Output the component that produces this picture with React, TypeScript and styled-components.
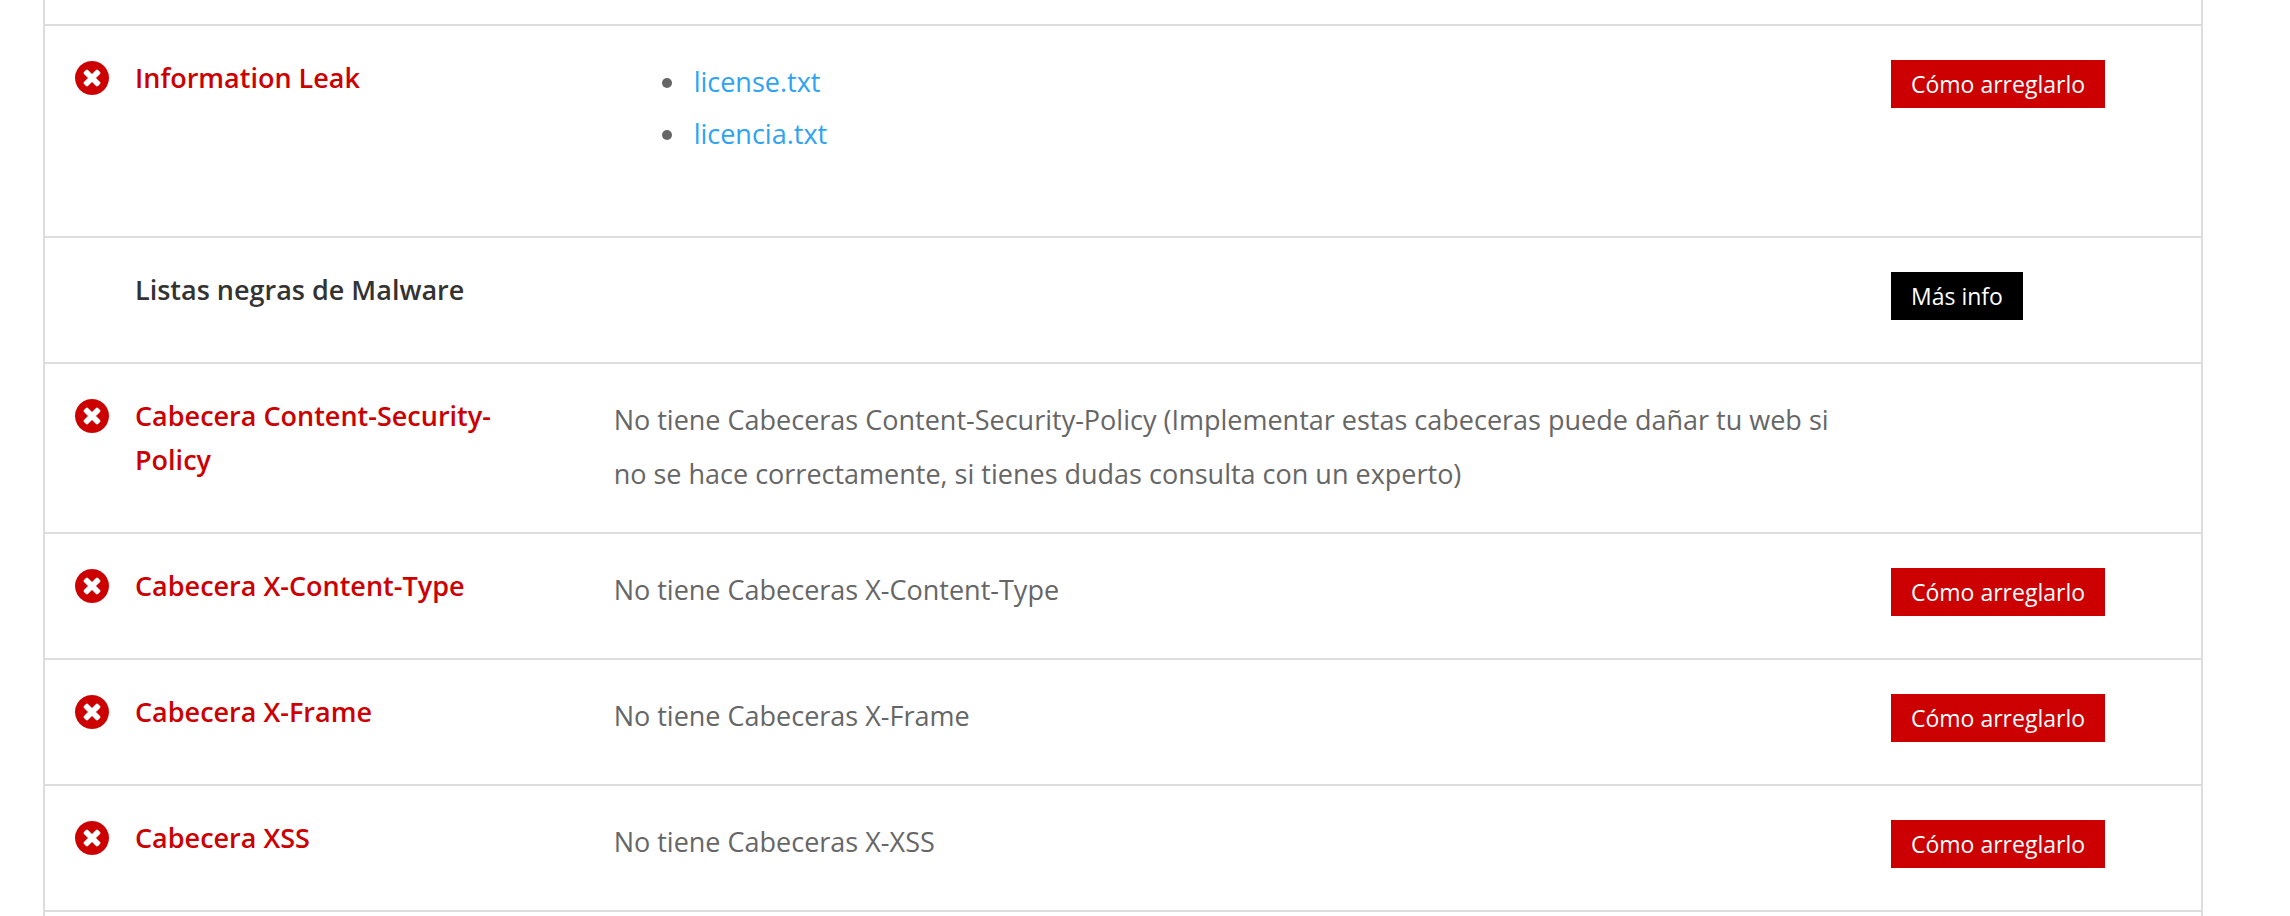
import React from 'react';
import styled, { createGlobalStyle } from 'styled-components';

const GlobalStyle = createGlobalStyle`
  *, *::before, *::after {
    box-sizing: border-box;
  }

  body {
    margin: 0;
    background: #fff;
    color: #666;
    font-family: 'Trebuchet MS', 'Open Sans', 'Noto Sans', sans-serif;
    font-size: 27px;
    line-height: 54px;
  }
`;

const Report = styled.main`
  min-height: 100vh;
  margin: 0 87px 0 43px;
  border: solid #ddd;
  border-width: 0 2px;
`;

const ChecksTable = styled.table`
  width: 100%;
  table-layout: fixed;
  border-collapse: separate;
  border-spacing: 0;
`;

const IconColumn = styled.col`
  width: 60px;
`;

const NameColumn = styled.col`
  width: 22.2%;
`;

const ActionColumn = styled.col`
  width: 340px;
`;

const CheckRow = styled.tr`
  vertical-align: top;
`;

const Cell = styled.td`
  padding: 30px 0 30px 30px;
  border-bottom: 2px solid #ddd;
  text-align: left;
`;

const DescriptionCell = styled(Cell)`
  padding-top: 29px;
  padding-right: 10px;
`;

/* Bottom edge of the check that precedes the visible ones. */
const PreviousCell = styled(Cell)`
  height: 26px;
  padding: 0;
`;

const CheckName = styled.th<{ $failed: boolean }>`
  padding: 30px 60px 30px 30px;
  border-bottom: 2px solid #ddd;
  color: ${({ $failed }) => ($failed ? '#c00' : '#333')};
  font-weight: 600;
  line-height: 44px;
  text-align: left;
`;

const Description = styled.p`
  margin: 0;
  padding-bottom: 1px;
`;

const StatusIcon = styled.svg`
  display: block;
  width: 34px;
  height: 34px;
  margin-top: 5px;
  fill: #c00;
`;

const FileList = styled.ul`
  margin: 0;
  padding: 1px 0 46px 80px;
  line-height: 52px;
`;

const FileItem = styled.li`
  display: flex;
  align-items: center;

  &::before {
    content: '';
    width: 10px;
    height: 10px;
    margin: 2px 22px 0 -32px;
    border-radius: 50%;
    background: #666;
  }
`;

const FileLink = styled.a`
  color: #2ea3f2;
  text-decoration: none;
`;

const ActionButton = styled.button<{ $tone: 'fix' | 'info' }>`
  display: block;
  height: 48px;
  margin: 4px 0 12px;
  padding: 0 20px;
  border: 0;
  background: ${({ $tone }) => ($tone === 'fix' ? '#c00' : '#000')};
  color: #fff;
  font-family: inherit;
  font-size: 23px;
  line-height: 46px;
  white-space: nowrap;
  cursor: pointer;
`;

type Check = {
  name: string;
  failed: boolean;
  description?: string;
  files?: string[];
  action?: 'fix' | 'info';
};

const checks: Check[] = [
  { name: 'Information Leak', failed: true, files: ['license.txt', 'licencia.txt'], action: 'fix' },
  { name: 'Listas negras de Malware', failed: false, action: 'info' },
  {
    name: 'Cabecera Content-Security-Policy',
    failed: true,
    description:
      'No tiene Cabeceras Content-Security-Policy (Implementar estas cabeceras puede dañar tu web si no se hace correctamente, si tienes dudas consulta con un experto)',
  },
  { name: 'Cabecera X-Content-Type', failed: true, description: 'No tiene Cabeceras X-Content-Type', action: 'fix' },
  { name: 'Cabecera X-Frame', failed: true, description: 'No tiene Cabeceras X-Frame', action: 'fix' },
  { name: 'Cabecera XSS', failed: true, description: 'No tiene Cabeceras X-XSS', action: 'fix' },
];

const actionLabels = { fix: 'Cómo arreglarlo', info: 'Más info' };

function FailedIcon() {
  return (
    <StatusIcon viewBox="0 128 1536 1536" aria-hidden="true">
      <path d="M1149 1122q0-26-19-45l-181-181 181-181q19-19 19-45 0-27-19-46l-90-90q-19-19-46-19-26 0-45 19l-181 181-181-181q-19-19-45-19-27 0-46 19l-90 90q-19 19-19 46 0 26 19 45l181 181-181 181q-19 19-19 45 0 27 19 46l90 90q19 19 46 19 26 0 45-19l181-181 181 181q19 19 45 19 27 0 46-19l90-90q19-19 19-46zm387-226q0 209-103 385.500t-279.500 279.500-385.500 103-385.500-103-279.500-279.500-103-385.500 103-385.500 279.500-279.500 385.500-103 385.500 103 279.500 279.500 103 385.500z" />
    </StatusIcon>
  );
}

export default function App() {
  return (
    <>
      <GlobalStyle />
      <Report>
        <ChecksTable>
          <colgroup>
            <IconColumn />
            <NameColumn />
            <col />
            <ActionColumn />
          </colgroup>
          <tbody>
            <CheckRow>
              <PreviousCell colSpan={4} />
            </CheckRow>
            {checks.map((check) => (
              <CheckRow key={check.name}>
                <Cell>{check.failed && <FailedIcon />}</Cell>
                <CheckName scope="row" $failed={check.failed}>
                  {check.name}
                </CheckName>
                <DescriptionCell>
                  {check.description && <Description>{check.description}</Description>}
                  {check.files && (
                    <FileList>
                      {check.files.map((file) => (
                        <FileItem key={file}>
                          <FileLink href={`#${file}`}>{file}</FileLink>
                        </FileItem>
                      ))}
                    </FileList>
                  )}
                </DescriptionCell>
                <Cell>
                  {check.action && (
                    <ActionButton type="button" $tone={check.action}>
                      {actionLabels[check.action]}
                    </ActionButton>
                  )}
                </Cell>
              </CheckRow>
            ))}
          </tbody>
        </ChecksTable>
      </Report>
    </>
  );
}
